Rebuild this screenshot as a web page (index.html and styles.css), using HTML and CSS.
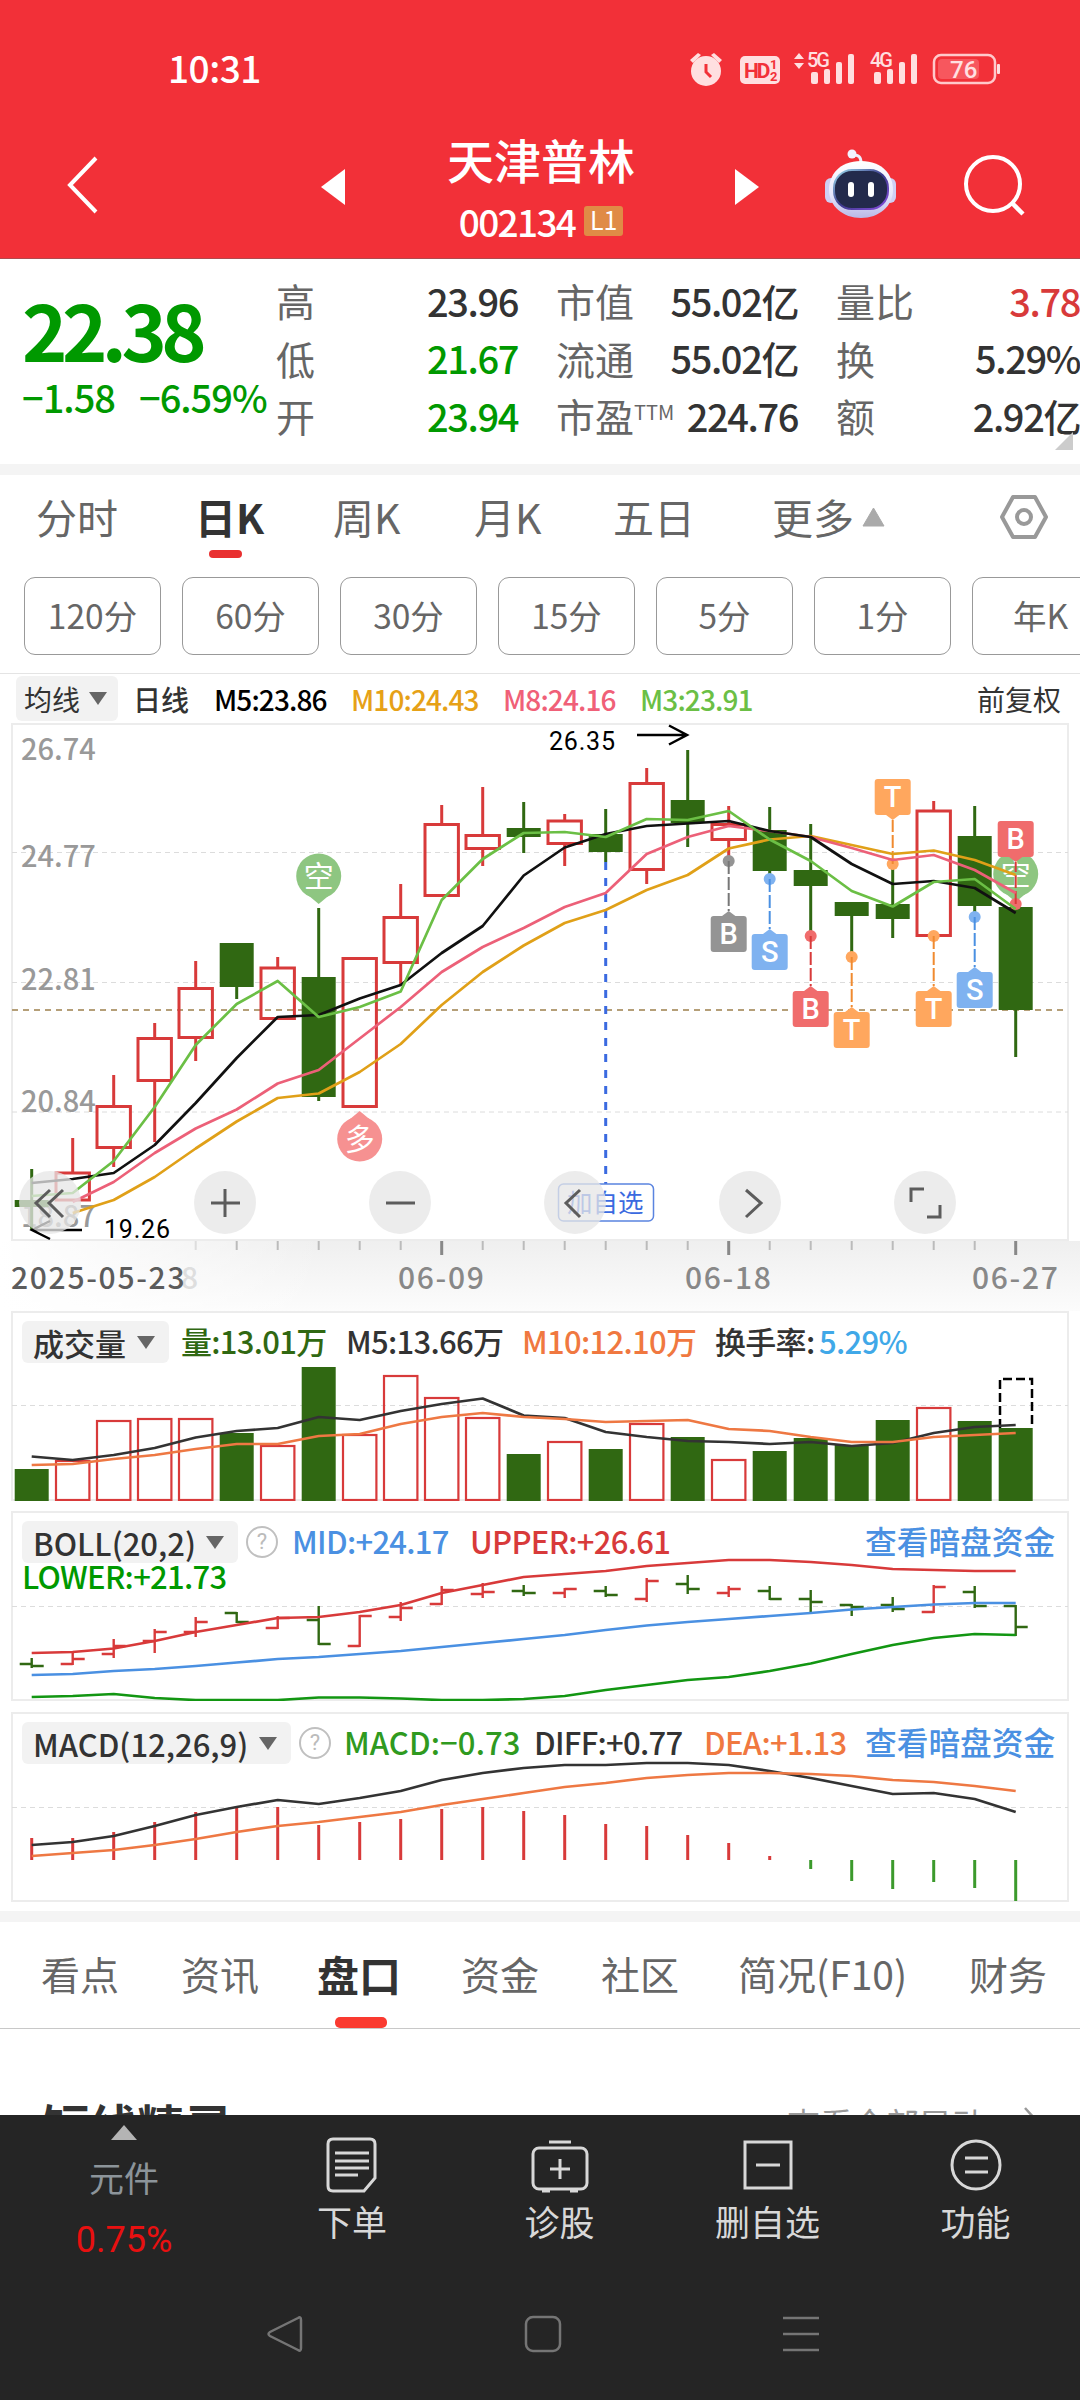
FILE: index.html
```html
<!DOCTYPE html>
<html lang="zh-CN">
  <head>
    <meta charset="UTF-8" />
    <meta name="viewport" content="width=device-width, initial-scale=1.0" />
    <title>天津普林 002134</title>
    <link rel="stylesheet" href="styles.css">
  </head>
  <body>
    <header class="header">
      <div class="status-bar">
        <span class="clock">10:31</span>
        <svg class="status-icons" width="320" height="44" viewBox="685 46 320 44">
          <g fill="#ffdfe0">
            <circle cx="706" cy="71" r="15" />
            <path d="M690 60l8-7 3 2-8 8zM722 60l-8-7-3 2 8 8z" />
            <rect x="740" y="56" width="40" height="28" rx="5" />
            <path d="M794 59l5-6 5 6zM794 63l5 6 5-6z" />
            <rect x="811" y="72" width="7" height="12" rx="2" />
            <rect x="824" y="69" width="6" height="15" rx="2" />
            <rect x="836" y="62" width="6" height="22" rx="2" />
            <rect x="848" y="54" width="6" height="30" rx="2" />
            <rect x="874" y="72" width="7" height="12" rx="2" />
            <rect x="887" y="69" width="6" height="15" rx="2" />
            <rect x="899" y="62" width="6" height="22" rx="2" />
            <rect x="911" y="54" width="6" height="30" rx="2" />
            <rect x="997" y="64" width="3" height="10" rx="1" />
            <text x="807" y="67" class="net-text">5G</text>
            <text x="870" y="67" class="net-text">4G</text>
          </g>
          <path d="M706 64v8l5 5" fill="none" stroke="#f23038" stroke-width="3" />
          <text x="744" y="78" class="hd-text">HD</text>
          <text x="770" y="69" class="hd-small">1</text>
          <text x="770" y="81" class="hd-small">2</text>
          <rect x="934" y="55" width="61" height="28" rx="7" fill="none" stroke="#ffc9cb" stroke-width="2.5" />
          <rect x="938" y="59" width="41" height="20" rx="4" fill="#f7575e" />
          <text x="950" y="78" class="battery-text">76</text>
        </svg>
      </div>
      <div class="nav">
        <svg class="nav-back" width="40" height="64" viewBox="0 0 40 64"><path d="M33 5L7 32l26 27" fill="none" stroke="#fff" stroke-width="4" /></svg>
        <svg class="nav-prev" width="24" height="36" viewBox="0 0 24 36"><path d="M24 0v36L0 18z" fill="#fff" /></svg>
        <div class="stock">
          <h1>天津普林</h1>
          <p><span>002134</span><b class="level">L1</b></p>
        </div>
        <svg class="nav-next" width="24" height="36" viewBox="0 0 24 36"><path d="M0 0v36l24-18z" fill="#fff" /></svg>
        <svg class="robot" width="74" height="70" viewBox="0 0 74 70">
          <defs>
            <linearGradient id="shell" x1="0" y1="0" x2="0" y2="1"><stop offset="0" stop-color="#fff" /><stop offset=".6" stop-color="#e6e6fb" /><stop offset="1" stop-color="#b9b8e6" /></linearGradient>
            <linearGradient id="rim" x1="0" y1="0" x2="1" y2="1"><stop offset="0" stop-color="#9fe0f0" /><stop offset=".5" stop-color="#3c3a8c" /><stop offset="1" stop-color="#8a4ee0" /></linearGradient>
          </defs>
          <path d="M37 14c0-6-2-8-8-8" fill="none" stroke="#eeeefc" stroke-width="3" />
          <circle cx="28" cy="5" r="4.5" fill="#f3f2ff" />
          <rect x="1" y="29" width="12" height="25" rx="6" fill="#cfcff4" />
          <rect x="60" y="29" width="12" height="25" rx="6" fill="#cfcff4" />
          <path d="M37 12c22 0 32 14 32 29 0 16-14 28-32 28S5 57 5 41c0-15 10-29 32-29z" fill="url(#shell)" />
          <rect x="10" y="21" width="54" height="39" rx="18" fill="#232a4c" stroke="url(#rim)" stroke-width="2" />
          <rect x="24" y="33" width="6" height="15" rx="3" fill="#fff" />
          <rect x="44" y="33" width="6" height="15" rx="3" fill="#fff" />
        </svg>
        <svg class="search" width="64" height="64" viewBox="0 0 64 64"><circle cx="30" cy="30" r="27" fill="none" stroke="#fff" stroke-width="4" /><path d="M49 49l11 11" stroke="#fff" stroke-width="4.5" /></svg>
      </div>
    </header>

    <section class="quote">
      <div class="quote-main down">
        <div class="price">22.38</div>
        <div class="change"><span>−1.58</span><span>−6.59%</span></div>
      </div>
      <dl class="quote-grid">
        <div><dt>高</dt><dd>23.96</dd></div>
        <div><dt>市值</dt><dd>55.02亿</dd></div>
        <div><dt>量比</dt><dd class="up">3.78</dd></div>
        <div><dt>低</dt><dd class="down">21.67</dd></div>
        <div><dt>流通</dt><dd>55.02亿</dd></div>
        <div><dt>换</dt><dd>5.29%</dd></div>
        <div><dt>开</dt><dd class="down">23.94</dd></div>
        <div><dt>市盈<sup>TTM</sup></dt><dd>224.76</dd></div>
        <div><dt>额</dt><dd>2.92亿</dd></div>
      </dl>
      <i class="corner"></i>
    </section>

    <nav class="periods">
      <span>分时</span>
      <span class="active">日K</span>
      <span>周K</span>
      <span>月K</span>
      <span>五日</span>
      <span class="more">更多<svg width="23" height="20" viewBox="0 0 23 20"><path d="M11.500 1L22 19H1z" fill="#aaa" stroke="#aaa" stroke-linejoin="round" /></svg></span>
      <svg width="50" height="46" viewBox="0 0 50 46"><path d="M14 3h22l11 20-11 20H14L3 23z" fill="none" stroke="#999" stroke-width="4" stroke-linejoin="round" /><circle cx="25" cy="23" r="7" fill="none" stroke="#999" stroke-width="4" /></svg>
    </nav>

    <div class="minutes">
      <span>120分</span>
      <span>60分</span>
      <span>30分</span>
      <span>15分</span>
      <span>5分</span>
      <span>1分</span>
      <span>年K</span>
    </div>

    <div class="ma-row">
      <span class="picker">均线<i></i></span>
      <b>日线</b>
      <span class="c-m5">M5:23.86</span>
      <span class="c-m10">M10:24.43</span>
      <span class="c-m8">M8:24.16</span>
      <span class="c-m3">M3:23.91</span>
      <span class="adjust">前复权</span>
    </div>

    <section class="panel kline">
      <svg id="kline" width="1058" height="518" viewBox="11 723 1058 518"></svg>
      <div class="controls">
        <button><svg viewBox="0 0 62 62"><path d="M31 18L17 31l14 14M44 18L30 31l14 14" /></svg></button>
        <button><svg viewBox="0 0 62 62"><path d="M17 31h29M31 17v28" /></svg></button>
        <button><svg viewBox="0 0 62 62"><path d="M17 31h29" /></svg></button>
        <button><svg viewBox="0 0 62 62"><path d="M36 18L22 31l14 14" /></svg></button>
        <button><svg viewBox="0 0 62 62"><path d="M27 18l15 13-15 14" /></svg></button>
        <button><svg viewBox="0 0 62 62"><path d="M17 30V17h13M46 33v12H33" /></svg></button>
      </div>
    </section>
    <svg id="axis" class="axis" width="1080" height="70" viewBox="0 1241 1080 70"></svg>

    <section class="panel panel-volume">
      <svg id="volume" width="1058" height="190" viewBox="11 1311 1058 190"></svg>
      <div class="legend legend-volume">
        <span class="picker">成交量<i></i></span>
        <span class="c-vol">量:13.01万</span>
        <span>M5:13.66万</span>
        <span class="c-orange">M10:12.10万</span>
        <span>换手率:</span>
        <span class="c-rate">5.29%</span>
      </div>
    </section>

    <section class="panel">
      <svg id="boll" width="1058" height="190" viewBox="11 1511 1058 190"></svg>
      <div class="legend legend-boll">
        <span class="picker">BOLL(20,2)<i></i></span>
        <em class="help">?</em>
        <span class="c-blue">MID:+24.17</span>
        <span class="up">UPPER:+26.61</span>
        <span class="c-blue dark-pool">查看暗盘资金</span>
        <span class="lower down">LOWER:+21.73</span>
      </div>
    </section>

    <section class="panel">
      <svg id="macd" width="1058" height="190" viewBox="11 1712 1058 190"></svg>
      <div class="legend legend-macd">
        <span class="picker">MACD(12,26,9)<i></i></span>
        <em class="help">?</em>
        <span class="c-macd">MACD:−0.73</span>
        <span>DIFF:+0.77</span>
        <span class="c-orange">DEA:+1.13</span>
        <span class="c-blue dark-pool">查看暗盘资金</span>
      </div>
    </section>

    <nav class="tabs">
      <span>看点</span>
      <span>资讯</span>
      <span class="active">盘口</span>
      <span>资金</span>
      <span>社区</span>
      <span>简况(F10)</span>
      <span>财务</span>
    </nav>

    <section class="spirit">
      <h2>短线精灵</h2>
      <span>查看全部异动</span>
      <svg width="14" height="26" viewBox="0 0 14 26"><path d="M2 2l10 11L2 24" fill="none" stroke="#999" stroke-width="2.500" /></svg>
    </section>

    <footer class="toolbar">
      <div class="actions">
        <div class="sector">
          <svg width="26" height="15" viewBox="0 0 26 15"><path d="M13 0l13 15H0z" fill="#b4b4b4" /></svg>
          <span>元件</span>
          <strong>0.75%</strong>
        </div>
        <div class="action">
          <svg width="60" height="58" viewBox="0 0 60 58"><path d="M11 3h37q5 0 5 5v34L42 55H11q-5 0-5-5V8q0-5 5-5zM13 17h34M13 25h34M13 32h34M13 39h23" /></svg>
          <span>下单</span>
        </div>
        <div class="action">
          <svg width="60" height="58" viewBox="0 0 60 58"><rect x="3" y="12" width="54" height="41" rx="6" /><path d="M19 6h22M30 23v20M20 33h20M12 55h8M40 55h8" /></svg>
          <span>诊股</span>
        </div>
        <div class="action">
          <svg width="60" height="58" viewBox="0 0 60 58"><rect x="7" y="6" width="46" height="46" /><path d="M18 29h24" /></svg>
          <span>删自选</span>
        </div>
        <div class="action">
          <svg width="60" height="58" viewBox="0 0 60 58"><circle cx="30" cy="29" r="24" /><path d="M19 22h23M19 36h23" /></svg>
          <span>功能</span>
        </div>
      </div>
      <div class="system-nav">
        <svg width="38" height="38" viewBox="0 0 38 38"><path d="M32 3q3-2 3 2v28q0 4-3 2L4 21q-3-2 0-4z" /></svg>
        <svg width="38" height="38" viewBox="0 0 38 38"><rect x="2" y="2" width="34" height="34" rx="7" /></svg>
        <svg width="38" height="38" viewBox="0 0 38 38"><path d="M1 3h36M1 19h36M1 35h36" /></svg>
      </div>
    </footer>

    <script src="charts.js"></script>
  </body>
</html>
```

FILE: styles.css
```css
* {
  margin: 0;
  padding: 0;
  box-sizing: border-box;
}
body {
  width: 1080px;
  height: 2400px;
  overflow: hidden;
  font-family: "Noto Sans CJK SC", "Roboto", sans-serif;
  background: #fff;
  color: #333;
  line-height: 1;
  white-space: nowrap;
}
svg {
  display: block;
}
.up {
  color: #d83a3a;
}
.down {
  color: #090;
}

/* header */
.header {
  height: 259px;
  background: #f23038;
  border-bottom: 1px solid #b04a4e;
  color: #fff;
}
.status-bar {
  display: flex;
  justify-content: space-between;
  padding: 46px 75px 0 168px;
  height: 132px;
}
.clock {
  font-size: 37px;
  font-weight: 500;
  letter-spacing: -0.500px;
  line-height: 43px;
}
.net-text {
  font: 500 20px "Roboto", sans-serif;
  letter-spacing: -2px;
}
.hd-text {
  font: 700 21px "Roboto", sans-serif;
  letter-spacing: -2px;
  fill: #f23038;
}
.hd-small {
  font: 700 13px "Roboto", sans-serif;
  fill: #f23038;
}
.battery-text {
  font: 500 24px "Roboto", sans-serif;
  fill: #ffe0e1;
}
.nav {
  display: grid;
  grid-template-columns: 258px 76px 338px 90px 139px 64px;
  padding-left: 63px;
  height: 126px;
}
.nav-back {
  margin-top: 21px;
}
.nav-prev,
.nav-next {
  margin-top: 37px;
}
.stock {
  text-align: center;
  padding-right: 50px;
}
.stock h1 {
  font-size: 47px;
  font-weight: 500;
  line-height: 54px;
}
.stock p {
  display: flex;
  justify-content: center;
  align-items: center;
  gap: 9px;
  margin-top: 17px;
  font-size: 37px;
  font-weight: 500;
  letter-spacing: -1.700px;
  line-height: 36px;
}
.level {
  background: #e08b46;
  border-radius: 3px;
  width: 39px;
  height: 30px;
  font-size: 25px;
  font-weight: 400;
  letter-spacing: 0;
  line-height: 27px;
}
.robot {
  margin: 17px 0 0 -1px;
}
.search {
  margin: 22px 0 0 -1px;
}

/* quote */
.quote {
  position: relative;
  display: flex;
  height: 216px;
  border-bottom: 11px solid #f4f4f4;
}
.quote-main {
  width: 276px;
  padding-left: 22px;
}
.price {
  font-size: 77px;
  font-weight: 700;
  letter-spacing: -5.500px;
  line-height: 80px;
  margin-top: 30px;
}
.change {
  display: flex;
  gap: 24px;
  margin-top: 9px;
  font-size: 38px;
  font-weight: 500;
  letter-spacing: -1px;
}
.quote-grid {
  display: grid;
  grid-template-columns: 242px 242px 244px;
  grid-auto-rows: 57.500px;
  column-gap: 38px;
  padding-top: 13px;
}
.quote-grid div {
  display: flex;
  justify-content: space-between;
  align-items: center;
}
.quote-grid dt {
  font-size: 39px;
  color: #666;
}
.quote-grid dd {
  font-size: 38px;
  font-weight: 500;
  letter-spacing: -1.400px;
}
.quote-grid sup {
  display: inline-block;
  font-size: 20px;
  vertical-align: 12px;
}
.corner {
  position: absolute;
  right: 7px;
  bottom: 14px;
  border-left: 18px solid transparent;
  border-bottom: 18px solid #ccc;
}

/* period tabs */
.periods {
  display: grid;
  grid-template-columns: 159px 138px 141px 139px 159px 227px 50px;
  align-items: center;
  height: 84px;
  padding: 0 0 1px 36px;
  font-size: 41px;
  color: #666;
}
.periods .active {
  position: relative;
  color: #333;
  font-weight: 700;
}
.periods .active::after {
  content: "";
  position: absolute;
  left: 14px;
  top: 54px;
  width: 33px;
  height: 8px;
  border-radius: 4px;
  background: #e93030;
}
.periods .more {
  display: flex;
  align-items: center;
  gap: 8px;
}
.minutes {
  display: flex;
  gap: 21px;
  height: 115px;
  padding: 18px 0 0 24px;
  border-bottom: 1px solid #e4e4e4;
  overflow: hidden;
}
.minutes span {
  flex: 0 0 137px;
  height: 78px;
  border: 1px solid #999;
  border-radius: 11px;
  text-align: center;
  font-size: 33.500px;
  line-height: 74px;
  color: #666;
}

/* indicator legends */
.picker {
  display: flex;
  align-items: center;
  justify-content: space-between;
  background: #f2f2f2;
  border-radius: 6px;
}
.picker i {
  border: 9px solid transparent;
  border-top: 13px solid #666;
  border-bottom: 0;
}
.ma-row {
  display: grid;
  grid-template-columns: 102px 81px 137px 152px 137px 337px auto;
  align-items: center;
  height: 49px;
  padding-left: 16px;
  font-size: 28px;
  font-weight: 500;
}
.ma-row > * {
  padding-left: 15px;
}
.ma-row .picker {
  height: 45px;
  padding: 0 11px 0 8px;
  font-weight: 400;
}
.ma-row b {
  font-weight: 500;
}
.ma-row [class^="c-"] {
  letter-spacing: -0.900px;
}
.ma-row .adjust {
  font-weight: 400;
}
.c-m5 {
  color: #000;
}
.c-m10 {
  color: #e6a117;
}
.c-m8 {
  color: #f06078;
}
.c-m3 {
  color: #6bbf45;
}
.c-vol {
  color: #306812;
}
.c-orange {
  color: #f07840;
}
.c-rate {
  color: #40a8e8;
}
.c-blue {
  color: #4a90e2;
}
.c-macd {
  color: #2f9a20;
}

/* charts */
.panel {
  display: grid;
  margin: 0 0 11px 11px;
  width: 1058px;
}
.panel > * {
  grid-area: 1 / 1;
}
.panel.kline {
  margin-bottom: 0;
}
.panel.panel-volume {
  margin-bottom: 10px;
}
.axis {
  background: linear-gradient(90deg, #fff, rgba(255, 255, 255, 0) 30%), linear-gradient(#efefef, #fcfcfc);
}
.controls {
  display: flex;
  align-self: end;
  gap: 113px;
  padding: 0 0 7px 8px;
}
.controls button {
  width: 62px;
  height: 63px;
  border: 0;
  border-radius: 50%;
  background: rgba(230, 230, 230, 0.76);
}
.controls path {
  fill: none;
  stroke: #5c5c5c;
  stroke-width: 3;
}
.legend {
  display: grid;
  align-content: start;
  align-items: center;
  padding: 10px 0 0 11px;
  grid-template-rows: 42px 30px;
  font-size: 31px;
  font-weight: 500;
}
.legend > span {
  height: 42px;
  line-height: 39px;
  letter-spacing: -0.700px;
}
.legend .picker {
  padding: 0 14px 0 11px;
  letter-spacing: 0;
}
.legend .dark-pool {
  font-size: 31.700px;
  letter-spacing: 0;
}
.legend-volume {
  grid-template-columns: 147px 177px 176px 193px 104px auto;
}
.legend-volume .c-vol {
  padding-left: 12px;
}
.legend-boll {
  grid-template-columns: 216px 54px 178px 395px auto;
}
.legend-macd {
  grid-template-columns: 269px 53px 190px 170px 161px auto;
}
.legend-macd .c-macd {
  letter-spacing: 0.100px;
}
.legend .lower {
  grid-column: 1 / -1;
  height: 30px;
  line-height: 26px;
}
.help {
  width: 32px;
  height: 32px;
  margin-left: 8px;
  border: 2px solid #c0c0c0;
  border-radius: 50%;
  color: #bbb;
  font: 400 22px / 28px "Roboto", sans-serif;
  text-align: center;
}
.y-label {
  font-size: 29px;
  font-weight: 500;
  fill: #999;
}
.x-label {
  font-size: 30px;
  font-weight: 500;
  letter-spacing: 1.700px;
  fill: #888;
}
.x-label.first {
  fill: #5c5c5c;
}
.x-label.ghost {
  fill: #dedede;
}
.extreme {
  font: 400 25px "Roboto", sans-serif;
  letter-spacing: 0.800px;
}
.tag-text {
  font: 500 29px "Roboto", sans-serif;
  fill: #fff;
  text-anchor: middle;
}
.balloon-text {
  font-size: 30px;
  fill: #fff;
  text-anchor: middle;
}
.note-text {
  font-size: 25.500px;
  fill: #3b6ae0;
}

/* bottom tabs */
.tabs {
  display: grid;
  grid-template-columns: 140px 136px 144px 140px 137px 231px auto;
  align-items: center;
  height: 118px;
  padding: 0 0 3px 41px;
  border-top: 11px solid #f4f4f4;
  border-bottom: 1px solid #c8c8c8;
  font-size: 39px;
  color: #666;
}
.panel + .tabs {
  margin-top: -2px;
}
.tabs .active {
  position: relative;
  font-size: 42px;
  font-weight: 700;
  color: #333;
}
.tabs .active::after {
  content: "";
  position: absolute;
  left: 18px;
  bottom: -33px;
  width: 52px;
  height: 11px;
  border-radius: 5px;
  background: #fa3a30;
}
.spirit {
  display: grid;
  grid-template-columns: 745px 236px auto;
  height: 86px;
  padding: 72px 0 0 42px;
  overflow: hidden;
}
.spirit h2 {
  font-size: 47.500px;
  font-weight: 700;
}
.spirit span {
  margin-top: 6px;
  font-size: 33px;
  color: #999;
}
.spirit svg {
  margin-top: 5px;
}

/* toolbar */
.toolbar {
  height: 285px;
  background: #252525;
  color: #d8d8d8;
}
.actions {
  display: grid;
  grid-template-columns: 248px 208px 207px 209px 207px;
  height: 200px;
  text-align: center;
}
.sector {
  display: flex;
  flex-direction: column;
  align-items: center;
  padding-top: 10px;
}
.sector span {
  margin-top: 19px;
  font-size: 35px;
  color: #8c949a;
}
.sector strong {
  margin-top: 25px;
  font: 400 36px "Roboto", sans-serif;
  color: #e81010;
}
.action {
  display: flex;
  flex-direction: column;
  align-items: center;
  padding-top: 21px;
  font-size: 35px;
}
.action svg {
  fill: none;
  stroke: #d8d8d8;
  stroke-width: 3;
  margin-bottom: 9px;
}
.system-nav {
  display: flex;
  justify-content: center;
  gap: 220px;
  padding-left: 6px;
  fill: none;
  stroke: #757575;
  stroke-width: 2.500;
}
```

FILE: charts.js
```js
const RED = "#d83a3a";
const GREEN = "#306812";
const x = (i) => 31.7 + 41 * i;

function line(x1, y1, x2, y2, color, width = 3, extra = "") {
  return `<line x1="${x1}" y1="${y1}" x2="${x2}" y2="${y2}" stroke="${color}" stroke-width="${width}" ${extra}/>`;
}

function curve(ys, color, start = 0, width = 2.7) {
  const points = ys.map((y, i) => `${x(i + start)},${y}`).join(" ");
  return `<polyline points="${points}" fill="none" stroke="${color}" stroke-width="${width}" stroke-linejoin="round"/>`;
}

function frame(top, height) {
  return `<rect x="12" y="${top + 1}" width="1056" height="${height - 2}" fill="#fff" stroke="#ececec" stroke-width="2"/>`;
}

function grid(y) {
  return line(12, y, 1068, y, "#dcdcdc", 1, 'stroke-dasharray="5 4"');
}

function bar(i, top, bottom, up) {
  return up
    ? `<rect x="${x(i) - 16.7}" y="${top}" width="33.4" height="${bottom - top}" fill="none" stroke="${RED}" stroke-width="3"/>`
    : `<rect x="${x(i) - 17}" y="${top}" width="34" height="${bottom - top}" fill="${GREEN}"/>`;
}

// high, body top, body bottom, low, rising
const candles = [
  [1169, 1200, 1207, 1230, 0], [1138, 1173, 1200, 1200, 1], [1075, 1106.5, 1147.5, 1167, 1],
  [1023, 1038.5, 1080.5, 1142, 1], [961, 988.5, 1037.5, 1061, 1], [943, 943, 987, 999, 0],
  [957, 968, 1018.5, 1018, 1], [908, 977, 1097, 1101, 0], [958.5, 958.5, 1106.5, 1106, 1],
  [884, 917.5, 962.5, 985, 1], [805, 824.5, 895.5, 895, 1], [787, 835.5, 848.5, 866, 1],
  [802, 828, 837, 853, 0], [814, 821, 843.5, 866, 1], [809, 834, 852, 862, 0],
  [768, 783.5, 869.5, 884, 1], [750, 800, 823, 847, 0], [806, 824.5, 839.5, 860, 1],
  [807, 830, 871, 877, 0], [824, 870, 886, 936, 0], [902, 902, 916, 957, 0],
  [864, 904, 919, 938, 0], [801, 811, 935.5, 935, 1], [806, 836, 906, 916, 0],
  [907, 907, 1010, 1057, 0],
];

// trade marks: index, dot y, tag top, letter, color, line color
const marks = [
  [17, 861, 916, "B", "#949494", "#777"], [18, 879, 934, "S", "#7fb2f0", "#4a90e2"],
  [19, 936, 991, "B", "#f06c6c", "#d83a3a"], [20, 957, 1012, "T", "#ffa75e", "#f08a30"],
  [21, 864, 779, "T", "#ffa75e", "#f08a30"], [22, 936, 991, "T", "#ffa75e", "#f08a30"],
  [23, 917, 972, "S", "#7fb2f0", "#4a90e2"], [24, 904, 821, "B", "#f06c6c", "#d83a3a"],
];

function mark([i, dot, top, letter, color, stroke]) {
  const cx = x(i);
  const below = top > dot;
  const tip = below ? top - 5 : top + 41;
  const edge = below ? top + 1 : top + 35;
  return `<circle cx="${cx}" cy="${dot}" r="6" fill="${color}"/>` +
    line(cx, dot, cx, tip, stroke, 2, 'stroke-dasharray="13 3"') +
    `<path d="M${cx - 8} ${edge}L${cx} ${tip}L${cx + 8} ${edge}z" fill="${color}"/>` +
    `<rect x="${cx - 18}" y="${top}" width="36" height="36" rx="3" fill="${color}"/>` +
    `<text x="${cx}" y="${top + 28}" class="tag-text">${letter}</text>`;
}

function balloon(i, cy, text, color, dir) {
  const cx = x(i);
  return `<g opacity=".95"><circle cx="${cx}" cy="${cy}" r="22.5" fill="${color}"/>` +
    `<path d="M${cx - 12} ${cy + 18 * dir}L${cx} ${cy + 28 * dir}L${cx + 12} ${cy + 18 * dir}z" fill="${color}"/>` +
    `<text x="${cx}" y="${cy + 11}" class="balloon-text">${text}</text></g>`;
}

function drawKline() {
  let s = frame(723, 518) + [852.5, 982.5, 1112].map(grid).join("");
  s += line(12, 1010, 1068, 1010, "#b59f78", 2, 'stroke-dasharray="6 5"');
  [["26.74", 760], ["24.77", 867], ["22.81", 990], ["20.84", 1112], ["18.87", 1227]].forEach(([t, y]) => {
    s += `<text x="21" y="${y}" class="y-label">${t}</text>`;
  });
  candles.forEach(([high, top, bottom, low, up], i) => {
    const color = up ? RED : GREEN;
    if (top > high) s += line(x(i), high, x(i), top, color);
    if (low > bottom) s += line(x(i), bottom, x(i), low, color);
    s += bar(i, top, bottom, up);
  });
  s += balloon(7, 876, "空", "#89c47b", 1) + balloon(8, 1139, "多", "#f68c8c", -1) + balloon(24, 874, "空", "#89c47b", 1);
  s += line(x(14), 862, x(14), 1184, "#3b6ae0", 3, 'stroke-dasharray="8 8"');
  s += `<rect x="558.5" y="1184" width="95" height="37" rx="5" fill="#fff" stroke="#5a84e0" stroke-width="1.5"/>`;
  s += `<text x="567" y="1212" class="note-text">加自选</text>`;
  s += marks.map(mark).join("");
  s += curve([1213, 1200, 1177, 1148.5, 1121.5, 1098, 1093.5, 1072, 1044, 1005, 972, 945.5, 923, 910, 890, 875, 848.5, 839.5, 836, 845, 854, 850.5, 860, 875], "#e0a018", 1);
  s += curve([1202, 1182, 1153, 1128.5, 1109.5, 1083.5, 1070, 1038.5, 1007, 972, 947, 928, 907, 893, 854, 837, 826, 831, 837, 848, 860, 855, 870, 893], "#ec6078", 1);
  s += curve([1183, 1179, 1173, 1145, 1103, 1058, 1017, 1015, 998.5, 985, 953, 926, 875.5, 847.5, 834, 826, 823.5, 821, 831, 837, 864, 884, 881, 888, 913], "#111");
  s += curve([1196, 1193, 1161, 1107, 1045, 1004, 981, 1017, 1007, 991.5, 900, 859, 833, 832, 837, 819, 820, 811, 839.5, 861, 891, 906.5, 882, 879, 909], "#6bbf45");
  s += `<text x="549" y="750" class="extreme">26.35</text><text x="104" y="1238" class="extreme">19.26</text>`;
  s += `<path d="M637 735h50M669 725.500l18 9.500l-18 9.500M82 1230H32M50 1221l-18 9l18 9" fill="none" stroke="#000" stroke-width="2.500"/>`;
  document.getElementById("kline").innerHTML = s;
}

function drawAxis() {
  let s = "";
  for (let i = 4; i < 25; i++) {
    const major = [10, 17, 24].includes(i);
    s += line(x(i), 1241, x(i), major ? 1255 : 1250, major ? "#888" : i === 4 ? "#ddd" : "#bbb", major ? 3 : 2);
  }
  s += `<text x="181" y="1289" class="x-label ghost">8</text><text x="11" y="1289" class="x-label first">2025-05-23</text>`;
  [["06-09", 398], ["06-18", 685], ["06-27", 972]].forEach(([t, left]) => {
    s += `<text x="${left}" y="1289" class="x-label">${t}</text>`;
  });
  document.getElementById("axis").innerHTML = s;
}

function drawVolume() {
  const tops = [1469, 1461, 1421, 1419, 1419, 1433, 1446, 1367, 1435, 1376, 1398, 1418, 1454, 1442, 1449, 1424, 1437, 1460, 1451, 1438, 1445, 1420, 1408, 1421, 1428];
  let s = frame(1311, 190) + grid(1405.5);
  tops.forEach((top, i) => {
    const up = candles[i][4];
    s += bar(i, top, up ? 1500 : 1501, up).replace('stroke-width="3"', 'stroke-width="2.2"');
  });
  s += `<path d="M1000 1428v-49h32v49" fill="none" stroke="#000" stroke-width="2.500" stroke-dasharray="9 4"/>`;
  s += curve([1456.5, 1460, 1455, 1448, 1437.5, 1431, 1428, 1417, 1420, 1411, 1404, 1398.5, 1415.5, 1418, 1432, 1437, 1441, 1442, 1444, 1442, 1446, 1443, 1433, 1427, 1425], "#333");
  s += curve([1465, 1464, 1459, 1455, 1449, 1444, 1444, 1436, 1434, 1424, 1417, 1413, 1417, 1419, 1422, 1421, 1420, 1429, 1431, 1437, 1442, 1442, 1437, 1435, 1433], "#ee7843");
  document.getElementById("volume").innerHTML = s;
}

function drawBoll() {
  // high, low, open, close
  const ohlc = [
    [1658, 1668, 1664, 1666], [1652, 1665, 1664, 1659], [1639, 1658, 1654, 1646], [1629, 1653, 1641, 1632],
    [1617, 1637, 1632, 1622], [1612, 1623, 1613, 1622], [1616, 1629, 1628, 1618], [1606, 1645, 1620, 1644],
    [1615, 1647, 1646, 1616], [1602, 1621, 1617, 1608], [1586, 1605, 1604, 1590], [1583, 1598, 1594, 1592],
    [1585, 1596, 1591, 1593], [1588, 1598, 1593, 1589], [1586, 1597, 1591, 1595], [1578, 1602, 1599, 1581],
    [1575, 1594, 1584, 1589], [1586, 1597, 1593, 1589], [1586, 1600, 1591, 1599], [1590, 1612, 1599, 1602],
    [1604, 1616, 1605, 1607], [1597, 1612, 1605, 1609], [1585, 1613, 1612, 1587], [1586, 1608, 1592, 1606],
    [1605, 1636, 1606, 1627],
  ];
  let s = frame(1511, 190) + grid(1606.5);
  ohlc.forEach(([high, low, open, close], i) => {
    const cx = x(i);
    s += `<path d="M${cx} ${high}V${low}M${cx - 12} ${open}H${cx}M${cx} ${close}h12" fill="none" stroke="${candles[i][4] ? RED : GREEN}" stroke-width="2.4"/>`;
  });
  s += curve([1653, 1652, 1648.5, 1641, 1632, 1625, 1618, 1617, 1612, 1605, 1593, 1585, 1577, 1574, 1571, 1566, 1563, 1560, 1560, 1562, 1565, 1569, 1570, 1571, 1571], RED);
  s += curve([1675, 1674, 1671, 1669, 1666, 1662.5, 1659, 1657, 1654, 1651, 1647, 1643, 1639, 1635, 1630, 1625.5, 1622, 1619, 1616, 1613, 1609.5, 1607, 1604.5, 1603, 1603], "#4a90e2");
  s += curve([1697, 1696, 1694, 1698, 1700, 1700, 1700, 1697.5, 1697.5, 1698.5, 1700, 1700, 1699, 1696, 1690, 1685, 1680, 1677, 1671, 1663.5, 1654, 1645, 1638, 1634, 1635], "#129612");
  document.getElementById("boll").innerHTML = s;
}

function drawMacd() {
  const ends = [1838, 1838, 1832, 1822, 1812, 1808, 1807, 1825, 1822, 1819, 1809, 1807, 1811, 1815, 1824, 1826, 1835, 1843, 1856, 1869, 1881, 1889, 1882, 1888, 1901];
  let s = frame(1712, 190) + grid(1807.5);
  ends.forEach((y, i) => {
    s += line(x(i), 1860, x(i), y, y < 1860 ? RED : "#3c9a2c");
  });
  s += curve([1845, 1842, 1836, 1826, 1815, 1807, 1800, 1804, 1798, 1791, 1780, 1773, 1768, 1765, 1765, 1763, 1763, 1765, 1771, 1778, 1786, 1794, 1793, 1799, 1812], "#333");
  s += curve([1856, 1853, 1850, 1845, 1839, 1832, 1826, 1822, 1817, 1812, 1805, 1799, 1793, 1787, 1783, 1778, 1775, 1773, 1773, 1774, 1776, 1780, 1782, 1786, 1791], "#ee7843");
  document.getElementById("macd").innerHTML = s;
}

drawKline();
drawAxis();
drawVolume();
drawBoll();
drawMacd();
```
